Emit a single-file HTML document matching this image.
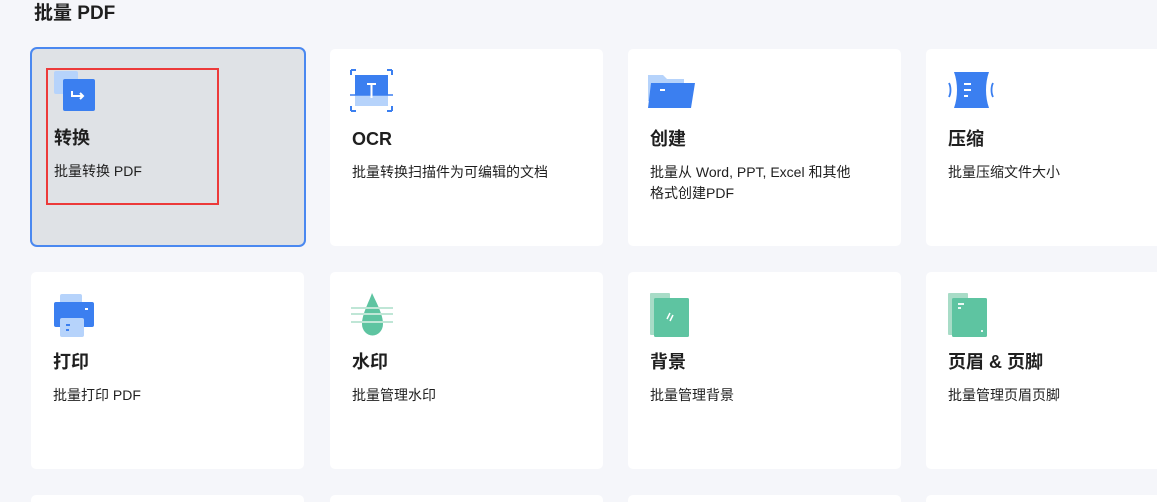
<!DOCTYPE html>
<html><head><meta charset="utf-8"><style>
*{margin:0;padding:0;box-sizing:border-box}
html,body{width:1157px;height:502px;overflow:hidden}
body{background:#f5f6fa;font-family:"Liberation Sans","Noto Sans CJK SC",sans-serif;color:#1f1f1f;position:relative}
h1{position:absolute;left:34px;top:1px;font-size:19px;font-weight:bold;line-height:26px}
.c{position:absolute;width:273px;height:197px;background:#fff;border-radius:5px}
.c svg{position:absolute;left:20px;top:20px}
.t{position:absolute;left:22px;top:78px;font-size:18px;font-weight:bold;line-height:24px}
.d{position:absolute;left:22px;top:113px;font-size:14px;line-height:21px;width:240px;white-space:nowrap}
.sel{background:#dfe2e6;border:2px solid #4a88f0;left:30px;top:47px;width:276px;height:200px;border-radius:7px}
.sel .t{left:22px;top:77px}.sel .d{left:22px;top:112px}
.red{position:absolute;left:46px;top:68px;width:173px;height:137px;border:2px solid #ec3a3a}
.b{height:7px;border-radius:5px 5px 0 0}
</style></head><body>
<h1>批量 PDF</h1>
<div class="c sel">
<svg width="50" height="50" style="left:22px;top:22px"><rect x="0" y="0" width="24" height="23" rx="2" fill="#b6d3fb"/><rect x="9" y="8" width="32" height="32" rx="2" fill="#3b7ff0"/><path d="M18 20v5h11M26 22l3 3-3 3" stroke="#fff" stroke-width="2" fill="none"/></svg>
<div class="t">转换</div><div class="d">批量转换 PDF</div></div>
<div class="red"></div>
<div class="c" style="left:330px;top:49px">
<svg width="44" height="44"><rect x="5" y="6" width="33" height="31" fill="#b6d3fb"/><rect x="5" y="6" width="33" height="20" fill="#3b7ff0"/><path d="M1 1h5M1 1v5M42 1h-5M42 1v5M1 42h5M1 42v-5M42 42h-5M42 42v-5" stroke="#3b7ff0" stroke-width="2" fill="none"/><path d="M0 26h43" stroke="#3b7ff0" stroke-width="1.5"/><path d="M17 15h9M21.5 15v14" stroke="#fff" stroke-width="2"/></svg>
<div class="t">OCR</div><div class="d">批量转换扫描件为可编辑的文档</div></div>
<div class="c" style="left:628px;top:49px">
<svg width="50" height="44"><path d="M0 6h15l4 4h17v22H0z" fill="#b6d3fb"/><path d="M3 14h44l-4 25H0z" fill="#3b7ff0"/><path d="M12 21h5" stroke="#fff" stroke-width="2"/></svg>
<div class="t">创建</div><div class="d">批量从 Word, PPT, Excel 和其他<br>格式创建PDF</div></div>
<div class="c" style="left:926px;top:49px">
<svg width="48" height="44"><path d="M3 14c2 4 2 10 0 14" stroke="#3b7ff0" stroke-width="1.8" fill="none"/><path d="M8 3h35c-4 11-4 25 0 36H8c4-11 4-25 0-36z" fill="#3b7ff0"/><path d="M47 14c-2 4-2 10 0 14" stroke="#3b7ff0" stroke-width="1.8" fill="none"/><path d="M18 15h7M18 21h7M18 27h4" stroke="#fff" stroke-width="2"/></svg>
<div class="t">压缩</div><div class="d">批量压缩文件大小</div></div>
<div class="c" style="left:31px;top:272px">
<svg width="46" height="46"><rect x="9" y="2" width="22" height="14" rx="2" fill="#b6d3fb"/><rect x="3" y="10" width="40" height="25" rx="2" fill="#3b7ff0"/><rect x="9" y="26" width="24" height="19" rx="2" fill="#b6d3fb"/><path d="M15 33h4M15 38h3" stroke="#3b7ff0" stroke-width="2"/><path d="M34 17h3" stroke="#fff" stroke-width="2"/></svg>
<div class="t">打印</div><div class="d">批量打印 PDF</div></div>
<div class="c" style="left:330px;top:272px">
<svg width="46" height="46"><path d="M22 1C19 10 12 22 12 32a10 11 0 0 0 21 0C33 22 26 10 22 1z" fill="#5ec4a1"/><path d="M1 16h42M1 22h42M1 30h42" stroke="#bfe6d6" stroke-width="2"/></svg>
<div class="t">水印</div><div class="d">批量管理水印</div></div>
<div class="c" style="left:628px;top:272px">
<svg width="46" height="46"><rect x="2" y="1" width="20" height="42" rx="1" fill="#a8dcc7"/><rect x="6" y="6" width="35" height="39" rx="1.5" fill="#5ec4a1"/><path d="M19 27l3-6M22 29l3-6" stroke="#fff" stroke-width="1.5"/></svg>
<div class="t">背景</div><div class="d">批量管理背景</div></div>
<div class="c" style="left:926px;top:272px">
<svg width="46" height="46"><rect x="2" y="1" width="20" height="42" rx="1" fill="#a8dcc7"/><rect x="6" y="6" width="35" height="39" rx="1.5" fill="#5ec4a1"/><path d="M12 12h6M12 16h3M35 39h2" stroke="#fff" stroke-width="1.8"/></svg>
<div class="t">页眉 &amp; 页脚</div><div class="d">批量管理页眉页脚</div></div>
<div class="c b" style="left:31px;top:495px"></div>
<div class="c b" style="left:330px;top:495px"></div>
<div class="c b" style="left:628px;top:495px"></div>
<div class="c b" style="left:926px;top:495px"></div>
</body></html>
